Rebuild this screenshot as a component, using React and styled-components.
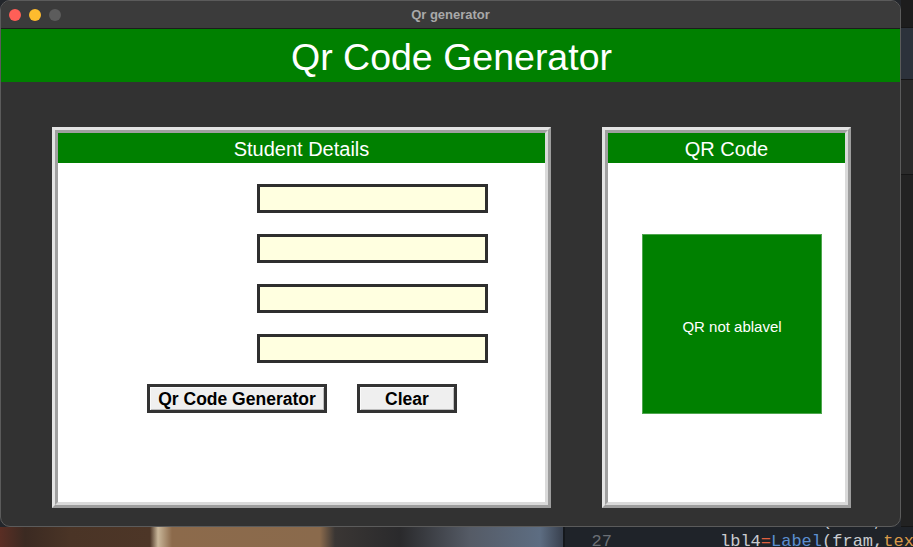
import React from 'react';
import styled, { createGlobalStyle } from 'styled-components';

const GlobalStyle = createGlobalStyle`
  html, body {
    margin: 0;
    padding: 0;
    width: 913px;
    height: 547px;
    overflow: hidden;
    background: #23262b;
    font-family: "Liberation Sans", Arial, Helvetica, sans-serif;
  }
  * { box-sizing: border-box; }
`;

const Desktop = styled.div`
  display: grid;
  grid-template-columns: 901px 12px;
  grid-template-rows: 527px 20px;
  width: 913px;
  height: 547px;
`;

const Window = styled.div`
  display: flex;
  flex-direction: column;
  border: 1px solid #5b5b5b;
  border-radius: 10px;
  overflow: hidden;
  background: #323232;
`;

const TitleBar = styled.div`
  display: grid;
  grid-template-columns: 1fr auto 1fr;
  align-items: center;
  height: 28px;
  flex-shrink: 0;
  background: #3b3b3b;
  border-bottom: 1px solid #1c1c1c;
  padding: 0 8px;
`;

const Lights = styled.div`
  display: flex;
  gap: 8px;
`;

const Light = styled.span`
  width: 12px;
  height: 12px;
  border-radius: 50%;
  background: ${(p) => p.color};
`;

const WindowTitle = styled.div`
  color: #a9a9a9;
  font-size: 13px;
  font-weight: bold;
`;

const Header = styled.div`
  height: 53px;
  flex-shrink: 0;
  background: #008000;
  color: #fff;
  font-size: 37.5px;
  display: flex;
  align-items: center;
  justify-content: center;
  padding: 4px 0 0 2px;
`;

const Body = styled.div`
  flex: 1;
  display: flex;
  padding: 45px 0 0 51px;
  gap: 51px;
`;

const Frame = styled.div`
  width: ${(p) => p.w}px;
  height: 381px;
  border: 3px solid;
  border-color: #e3e3e3 #9d9d9d #9d9d9d #e3e3e3;
`;

const FrameInner = styled.div`
  height: 100%;
  display: flex;
  flex-direction: column;
  background: #fff;
  border: 3px solid;
  border-color: #a0a0a0 #dadada #dadada #a0a0a0;
`;

const FrameTitle = styled.div`
  height: 30px;
  flex-shrink: 0;
  background: #008000;
  color: #fff;
  font-size: 20px;
  display: flex;
  align-items: center;
  justify-content: center;
  padding-top: 3px;
`;

const Form = styled.div`
  display: flex;
  flex-direction: column;
  padding-top: 21px;
`;

const Fields = styled.div`
  display: flex;
  flex-direction: column;
  gap: 21px;
  padding-left: 199px;
`;

const Entry = styled.input`
  width: 231px;
  height: 29px;
  border: 3px solid #2e2e2e;
  background: #ffffe0;
  outline: none;
  margin: 0;
`;

const Buttons = styled.div`
  display: flex;
  gap: 30px;
  padding: 21px 0 0 89px;
`;

const Button = styled.button`
  width: ${(p) => p.w}px;
  height: 29px;
  margin: 0;
  padding: 3px 0 0;
  border: 3px solid #333;
  box-shadow: inset 1px 1px 0 #fafafa, inset -1px -1px 0 #bdbdbd;
  background: #efefef;
  color: #000;
  font-family: "Liberation Sans", Arial, sans-serif;
  font-weight: bold;
  font-size: 17.5px;
  line-height: 1;
`;

const QrArea = styled.div`
  padding: 71px 0 0 34px;
`;

const QrBox = styled.div`
  width: 180px;
  height: 180px;
  background: #008000;
  border: 1px solid #4fa64f;
  color: #fff;
  font-size: 15px;
  display: flex;
  align-items: center;
  justify-content: center;
  padding-top: 4px;
`;

const SideStrip = styled.div`
  display: flex;
  flex-direction: column;
  background: #242424;
`;

const SideBlock = styled.div`
  height: ${(p) => p.h}px;
  background: ${(p) => p.bg};
  border-bottom: 1px solid #161616;
`;

const Photo = styled.div`
  background: linear-gradient(
    90deg,
    #5a2e24 0px,
    #3b2a22 25px,
    #4a3426 70px,
    #4d3627 150px,
    #c9b79a 158px,
    #8c6a4b 172px,
    #8a6a4c 320px,
    #3a3634 335px,
    #2a2a2c 400px,
    #555b66 470px,
    #5d6d82 540px,
    #3a4250 562px
  );
`;

const BottomRow = styled.div`
  grid-column: 1 / 3;
  display: grid;
  grid-template-columns: 563px 1fr;
`;

const Editor = styled.div`
  display: flex;
  flex-direction: column;
  justify-content: flex-end;
  overflow: hidden;
  background: #1f2329;
  border-left: 2px solid #15181c;
`;

const CodeLine = styled.div`
  display: flex;
  height: 20px;
  flex-shrink: 0;
  font-family: "Liberation Mono", "DejaVu Sans Mono", monospace;
  font-size: 17px;
  line-height: 20px;
  white-space: nowrap;
  &:last-child {
    margin-bottom: -5px;
  }
`;

const LineNo = styled.span`
  flex-shrink: 0;
  width: 47px;
  text-align: right;
  color: #6b6f75;
  margin-right: 108px;
`;

const Tok = styled.span`
  flex-shrink: 0;
  color: ${(p) => p.c};
`;

const lines = [
  { n: 26, id: 'lbl3' },
  { n: 27, id: 'lbl4' },
];

export default function App() {
  return (
    <>
      <GlobalStyle />
      <Desktop>
        <Window>
          <TitleBar>
            <Lights>
              <Light color="#ff5f57" />
              <Light color="#febc2e" />
              <Light color="#5c5c5c" />
            </Lights>
            <WindowTitle>Qr generator</WindowTitle>
            <span />
          </TitleBar>
          <Header>Qr Code Generator</Header>
          <Body>
            <Frame w={499}>
              <FrameInner>
                <FrameTitle>Student Details</FrameTitle>
                <Form>
                  <Fields>
                    <Entry />
                    <Entry />
                    <Entry />
                    <Entry />
                  </Fields>
                  <Buttons>
                    <Button w={180}>Qr Code Generator</Button>
                    <Button w={100}>Clear</Button>
                  </Buttons>
                </Form>
              </FrameInner>
            </Frame>
            <Frame w={249}>
              <FrameInner>
                <FrameTitle>QR Code</FrameTitle>
                <QrArea>
                  <QrBox>QR not ablavel</QrBox>
                </QrArea>
              </FrameInner>
            </Frame>
          </Body>
        </Window>
        <SideStrip>
          <SideBlock h={28} bg="#1d1d1d" />
          <SideBlock h={52} bg="#2c323b" />
          <SideBlock h={95} bg="#2a2a2a" />
          <SideBlock h={352} bg="#222222" />
        </SideStrip>
        <BottomRow>
          <Photo />
          <Editor>
            {lines.map((l) => (
              <CodeLine key={l.n}>
                <LineNo>{l.n}</LineNo>
                <Tok c="#c9cbcf">{l.id}</Tok>
                <Tok c="#e0603f">=</Tok>
                <Tok c="#5b8fd0">Label</Tok>
                <Tok c="#c9cbcf">(fram,</Tok>
                <Tok c="#d99a4a">text</Tok>
              </CodeLine>
            ))}
          </Editor>
        </BottomRow>
      </Desktop>
    </>
  );
}
